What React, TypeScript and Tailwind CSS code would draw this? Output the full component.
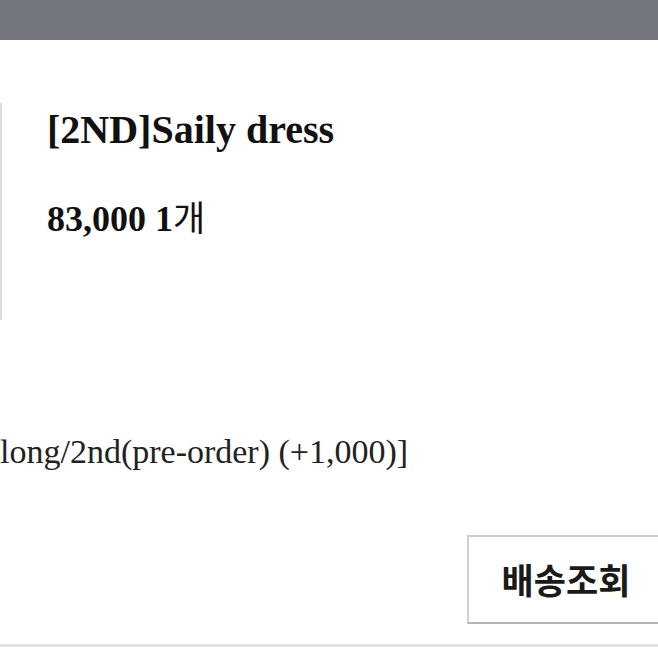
const SERIF = "font-['Liberation_Serif','Noto_Sans_CJK_KR',serif]";

export default function OrderItem() {
  return (
    <div className="w-[658px] h-[658px] overflow-hidden bg-white flex flex-col">
      <div className="h-[40px] bg-[#73767f] shrink-0" />

      <div className="flex mt-[63px]">
        <div className="w-[2px] h-[217px] bg-[#dcdcdc]" />
        <div className={`ml-[45px] flex flex-col ${SERIF} text-[#111]`}>
          <h1 className="mt-[7px] text-[40px] leading-[40px] font-bold">[2ND]Saily dress</h1>
          <p className="mt-[48px] text-[36px] leading-[36px] font-bold">
            83,000 1<span className="font-normal font-['Noto_Sans_CJK_KR',sans-serif] text-[35px]">개</span>
          </p>
        </div>
      </div>

      <p className={`mt-[115px] ${SERIF} text-[34px] leading-[34px] text-[#222] whitespace-nowrap`}>
        long/2nd(pre-order) (+1,000)]
      </p>

      <div className="mt-[66px] pl-[467px] flex">
        <button className="w-[198px] h-[89px] shrink-0 border-2 border-[#cfcfcf] border-b-[#b5b5b5] bg-white flex items-center justify-center text-[35px] font-bold text-[#1a1a1a] font-['Noto_Sans_CJK_KR',sans-serif]">
          배송조회
        </button>
      </div>

      <div className="mt-[20px] h-[3px] bg-[#e2e2e2]" />
    </div>
  );
}
